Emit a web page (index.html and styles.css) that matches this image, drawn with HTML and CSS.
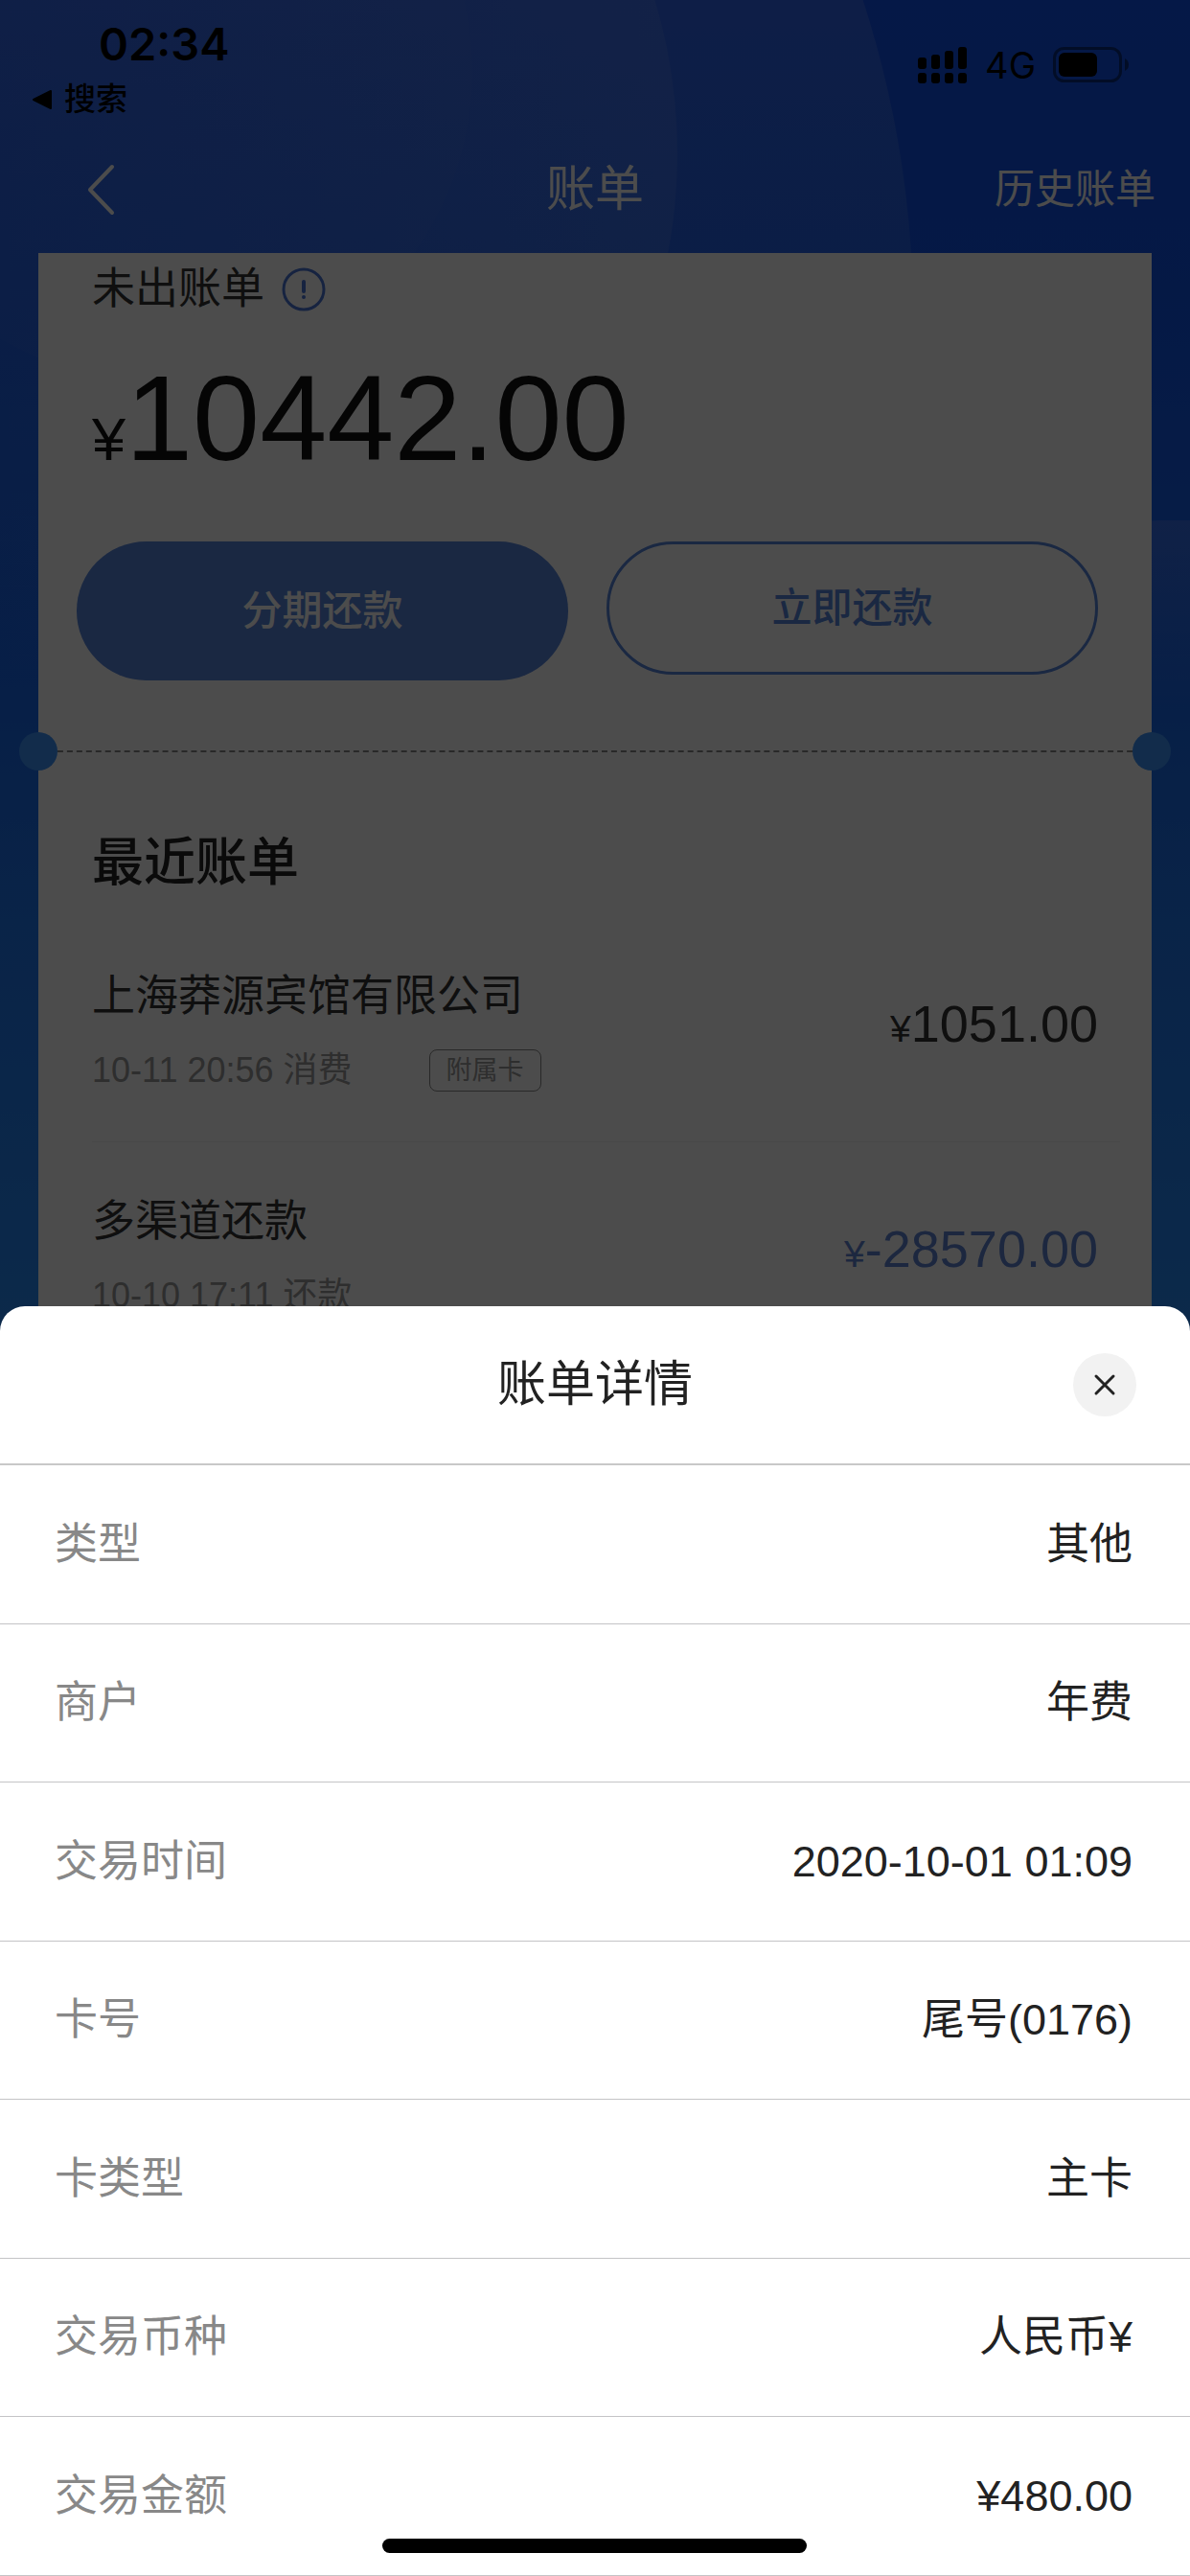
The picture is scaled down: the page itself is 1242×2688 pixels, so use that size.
FILE: index.html
```html
<!DOCTYPE html>
<html lang="zh-CN">
<head>
  <meta charset="UTF-8">
  <meta name="viewport" content="width=device-width, initial-scale=1">
  <title>账单</title>
  <link rel="stylesheet" href="styles.css">
</head>
<body>
  <div class="page">
    <!-- 背景圆弧 -->
    <svg class="page-bg" viewBox="0 0 1242 1400" preserveAspectRatio="xMidYMin slice" aria-hidden="true">
      <defs>
        <linearGradient id="arc" gradientUnits="userSpaceOnUse" x1="0" y1="0" x2="0" y2="720">
          <stop offset="0" stop-color="#5f86ef" stop-opacity="0.4"/>
          <stop offset="0.4" stop-color="#4b80ef" stop-opacity="0.34"/>
          <stop offset="0.8" stop-color="#3b80ef" stop-opacity="0.2"/>
          <stop offset="1" stop-color="#3b80ef" stop-opacity="0"/>
        </linearGradient>
        <linearGradient id="arcSide" gradientUnits="userSpaceOnUse" x1="0" y1="0" x2="700" y2="0">
          <stop offset="0" stop-color="#7fa0f0" stop-opacity="0"/>
          <stop offset="1" stop-color="#7fa0f0" stop-opacity="0.2"/>
        </linearGradient>
        <linearGradient id="blob" x1="0" y1="0" x2="0" y2="1">
          <stop offset="0" stop-color="#6084ee" stop-opacity="0.45"/>
          <stop offset="1" stop-color="#6084ee" stop-opacity="0"/>
        </linearGradient>
      </defs>
      <circle cx="-113" cy="330" r="1066" fill="url(#arc)"/>
      <circle cx="151" cy="160" r="556" fill="url(#arcSide)"/>
      <circle cx="168" cy="75" r="325" fill="#8fa8f0" fill-opacity="0.04"/>
      <rect x="1120" y="543" width="240" height="200" rx="90" fill="url(#blob)"/>
    </svg>

    <div class="status-bar">
      <div class="status-left">
        <div class="time">02:34</div>
        <a class="back-app" href="#">
          <svg width="22" height="22" viewBox="0 0 22 22" aria-hidden="true"><path d="M20 2v18L2 11z" stroke="#000" stroke-width="2" stroke-linejoin="round"/></svg>
          搜索
        </a>
      </div>
      <div class="status-right">
        <svg width="52" height="38" viewBox="0 0 52 38" aria-hidden="true">
          <rect x="0" y="11" width="9" height="12" rx="3"/>
          <rect x="14" y="8" width="9" height="15" rx="3"/>
          <rect x="28" y="4" width="9" height="19" rx="3"/>
          <rect x="42" y="0" width="9" height="23" rx="3"/>
          <rect x="0" y="27" width="9" height="11" rx="3"/>
          <rect x="14" y="27" width="9" height="11" rx="3"/>
          <rect x="28" y="27" width="9" height="11" rx="3"/>
          <rect x="42" y="27" width="9" height="11" rx="3"/>
        </svg>
        <span class="network">4G</span>
        <svg width="80" height="38" viewBox="0 0 80 38" aria-hidden="true">
          <rect x="1.5" y="1.5" width="69" height="34" rx="10" fill="none" stroke="#000" stroke-opacity="0.45" stroke-width="3"/>
          <rect x="6" y="6" width="40" height="25" rx="6"/>
          <path d="M75 12q4 2 4 6.500t-4 6.500z" fill-opacity="0.45"/>
        </svg>
      </div>
    </div>

    <header class="nav">
      <button class="nav-back" type="button" aria-label="返回">
        <svg width="30" height="54" viewBox="0 0 30 54"><path d="M27 3L4 27l23 24" fill="none" stroke="#fff" stroke-width="4" stroke-linecap="round" stroke-linejoin="round"/></svg>
      </button>
      <h1 class="nav-title">账单</h1>
      <a class="nav-link" href="#">历史账单</a>
    </header>

    <main class="card">
      <section class="unbilled">
        <div class="unbilled-label">
          未出账单
          <svg width="46" height="46" viewBox="0 0 46 46" aria-hidden="true">
            <circle cx="23" cy="23" r="21" fill="none" stroke="#4a76d8" stroke-width="3"/>
            <path d="M23 15v10" stroke="#4a76d8" stroke-width="4" stroke-linecap="round"/>
            <circle cx="23" cy="31" r="2" fill="#4a76d8"/>
          </svg>
        </div>
        <div class="total"><span class="yen">¥</span>10442.00</div>
      </section>

      <div class="actions">
        <button class="btn btn-primary" type="button">分期还款</button>
        <button class="btn btn-outline" type="button">立即还款</button>
      </div>

      <div class="tear"></div>

      <section class="recent">
        <h2>最近账单</h2>
        <ul class="bills">
          <li class="bill">
            <div>
              <div class="bill-name">上海莽源宾馆有限公司</div>
              <div class="bill-meta">10-11 20:56 消费<span class="tag">附属卡</span></div>
            </div>
            <div class="bill-amount"><span class="yen">¥</span>1051.00</div>
          </li>
          <li class="bill">
            <div>
              <div class="bill-name">多渠道还款</div>
              <div class="bill-meta">10-10 17:11 还款</div>
            </div>
            <div class="bill-amount repay"><span class="yen">¥</span>-28570.00</div>
          </li>
        </ul>
      </section>
    </main>
  </div>

  <div class="mask"></div>

  <!-- 账单详情弹层 -->
  <section class="sheet" role="dialog" aria-labelledby="sheet-title">
    <div class="sheet-header">
      <h2 id="sheet-title">账单详情</h2>
      <button class="sheet-close" type="button" aria-label="关闭">
        <svg width="24" height="24" viewBox="0 0 24 24"><path d="M3 3l18 18M21 3L3 21" stroke="#222" stroke-width="3" stroke-linecap="round"/></svg>
      </button>
    </div>
    <dl class="details">
      <div class="detail"><dt>类型</dt><dd>其他</dd></div>
      <div class="detail"><dt>商户</dt><dd>年费</dd></div>
      <div class="detail"><dt>交易时间</dt><dd>2020-10-01 01:09</dd></div>
      <div class="detail"><dt>卡号</dt><dd>尾号(0176)</dd></div>
      <div class="detail"><dt>卡类型</dt><dd>主卡</dd></div>
      <div class="detail"><dt>交易币种</dt><dd>人民币¥</dd></div>
      <div class="detail"><dt>交易金额</dt><dd>¥480.00</dd></div>
    </dl>
    <div class="home-indicator"></div>
  </section>
</body>
</html>
```

FILE: styles.css
```css
* {
  box-sizing: border-box;
}

body {
  margin: 0;
  height: 100vh;
  overflow: hidden;
  font-family: "Liberation Sans", "Noto Sans CJK SC", sans-serif;
  color: #333;
}

h1, h2, ul, dl, dd {
  margin: 0;
  padding: 0;
  font-weight: 400;
}

button {
  padding: 0;
  border: none;
  background: none;
  font-family: inherit;
  cursor: pointer;
}

a {
  color: inherit;
  text-decoration: none;
}

svg {
  display: block;
}

/* 页面 */
.page {
  position: relative;
  display: flex;
  flex-direction: column;
  height: 100vh;
  background: linear-gradient(#1150ed 0, #1254e8 300px, #1868ee 720px, #2178f0 960px, #288cfa 1400px);
}

.page-bg {
  position: absolute;
  top: 0;
  left: 0;
  width: 100%;
}

.status-bar,
.nav,
.card {
  position: relative;
}

/* 状态栏 */
.status-bar {
  display: flex;
  justify-content: space-between;
  height: 132px;
  padding: 18px 63px 0 33px;
  color: #000;
}

.time {
  padding-left: 70px;
  font: 600 47px/56px Inter, sans-serif;
}

.back-app {
  display: flex;
  align-items: center;
  gap: 12px;
  font-size: 33px;
  font-weight: 500;
  line-height: 60px;
}

.status-right {
  display: flex;
  align-items: center;
  gap: 18px;
  height: 100px;
}

.network {
  font: 400 38px/48px Inter, sans-serif;
}

/* 导航栏 */
.nav {
  display: grid;
  grid-template-columns: 1fr auto 1fr;
  align-items: center;
  height: 132px;
  padding: 0 36px;
  color: #fff;
}

.nav-back {
  justify-self: start;
  padding: 0 54px;
}

.nav-title {
  font-size: 51px;
  line-height: 60px;
}

.nav-link {
  justify-self: end;
  font-size: 42px;
  line-height: 60px;
}

/* 卡片 */
.card {
  flex: 1;
  margin: 0 40px;
  background: #fff;
}

.unbilled {
  padding: 0 56px;
}

.unbilled-label {
  display: flex;
  align-items: center;
  gap: 18px;
  font-size: 45px;
  line-height: 76px;
}

.total {
  margin-top: 34px;
  font-size: 126px;
  line-height: 126px;
  color: #111;
}

.total .yen {
  font-size: 63px;
  line-height: 1;
}

.actions {
  display: flex;
  align-items: flex-start;
  gap: 40px;
  padding: 65px 56px 73px 40px;
}

.btn {
  flex: 1 1 200px;
  height: 145px;
  border-radius: 73px;
  font-size: 42px;
  font-weight: 500;
  line-height: 60px;
}

.btn-primary {
  background: #5785dc;
  color: #fff;
}

.btn-outline {
  height: 139px;
  border: 3px solid #5785dc;
  color: #5785dc;
}

/* 票据撕口 */
.tear {
  position: relative;
  border-top: 2px dashed #888;
}

.tear::before,
.tear::after {
  content: "";
  position: absolute;
  top: -21px;
  width: 40px;
  height: 40px;
  border-radius: 50%;
  background: #3c93fa;
}

.tear::before {
  left: -20px;
}

.tear::after {
  right: -20px;
}

/* 最近账单 */
.recent {
  padding: 81px 33px 0 56px;
}

.recent h2 {
  margin-bottom: 23px;
  font-size: 54px;
  font-weight: 500;
  line-height: 68px;
  color: #222;
}

.bills {
  list-style: none;
}

.bill {
  display: flex;
  justify-content: space-between;
  align-items: flex-start;
  height: 235px;
  padding: 51px 23px 0 0;
  border-bottom: 1px solid #f0f0f0;
}

.bill-name {
  font-size: 45px;
  line-height: 64px;
}

.bill-meta {
  display: flex;
  align-items: center;
  margin-top: 23px;
  font-size: 36px;
  line-height: 44px;
  color: #999;
}

.tag {
  margin-left: 80px;
  padding: 0 17px;
  border: 1px solid #888;
  border-radius: 8px;
  font-size: 27px;
  line-height: 42px;
}

.bill-amount {
  font-size: 54px;
  line-height: 120px;
}

.bill-amount .yen {
  font-size: 39px;
  line-height: 1;
}

.repay {
  color: #6084d2;
}

/* 遮罩 */
.mask {
  position: fixed;
  inset: 0;
  background: rgba(0, 0, 0, 0.7);
}

/* 详情弹层 */
.sheet {
  position: fixed;
  left: 0;
  right: 0;
  bottom: 0;
  border-radius: 26px 26px 0 0;
  background: #fff;
  color: #222;
}

.sheet-header {
  display: grid;
  grid-template-columns: 1fr auto 1fr;
  align-items: center;
  height: 166px;
  padding: 0 56px;
  border-bottom: 2px solid #c8c8c8;
}

.sheet-header h2 {
  grid-column: 2;
  font-size: 51px;
  line-height: 60px;
}

.sheet-close {
  display: grid;
  place-items: center;
  justify-self: end;
  width: 66px;
  height: 66px;
  border-radius: 50%;
  background: #f2f2f2;
}

.detail {
  display: flex;
  justify-content: space-between;
  align-items: center;
  height: 165px;
  padding: 0 60px 0 57px;
  border-bottom: 1px solid #c4c4c6;
  font-size: 45px;
  line-height: 60px;
}

.detail:nth-child(odd) {
  height: 166px;
}

.detail dt {
  color: #888;
}

.home-indicator {
  position: absolute;
  left: 50%;
  bottom: 24px;
  width: 443px;
  height: 15px;
  margin-left: -222px;
  border-radius: 8px;
  background: #000;
}
```
